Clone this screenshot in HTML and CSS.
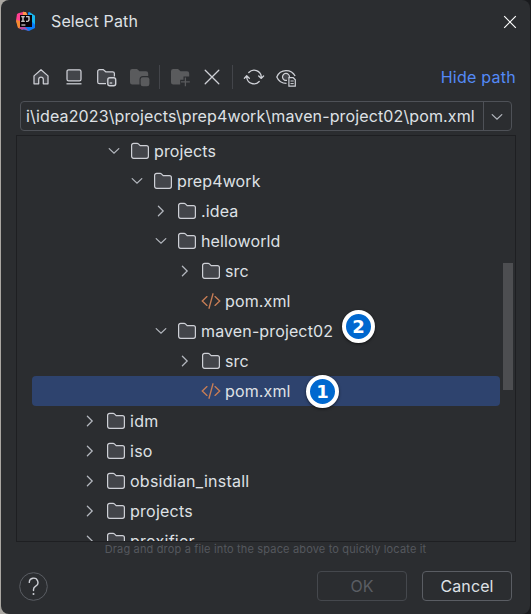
FILE: index.html
```html
<!DOCTYPE html>
<html lang="en">
<head>
<meta charset="utf-8">
<title>Select Path</title>
<link rel="stylesheet" href="styles.css">
</head>
<body>
<svg class="defs" width="0" height="0">
  <symbol id="folder" viewBox="0 0 20 20"><path d="M1.6 4.4a2 2 0 0 1 2-2h3.5a2 2 0 0 1 1.3.5l1.8 1.7h6.2a2 2 0 0 1 2 2v8.7a2 2 0 0 1-2 2H3.6a2 2 0 0 1-2-2z" fill="#43454a" stroke="#ced0d6" stroke-width="1.2"/></symbol>
  <symbol id="down" viewBox="0 0 20 20"><path d="M5.2 7.6 10 12.2l4.8-4.6" fill="none" stroke="#b4b8bf" stroke-width="1.25" stroke-linecap="round"/></symbol>
  <symbol id="right" viewBox="0 0 20 20"><path d="M7.4 5.2 12.2 10l-4.8 4.8" fill="none" stroke="#b4b8bf" stroke-width="1.25" stroke-linecap="round"/></symbol>
  <symbol id="xml" viewBox="0 0 20 20"><path d="M6 5.6 1.3 10 6 14.4M14 5.6l4.7 4.4-4.7 4.4M12 2.8 8 17.2" fill="none" stroke="#c77d55" stroke-width="1.35" stroke-linecap="round"/></symbol>
</svg>
<main class="window">
  <header class="title">
    <svg class="logo" width="20" height="20" viewBox="0 0 20 20">
      <path d="M1 3 8 .5l3 7L5 18l-3-2L0 9z" fill="#f0407c"/>
      <path d="M0 10 3 5l5 7-2 6-4-1z" fill="#f58a32"/>
      <path d="M7 1h3l2 4H7z" fill="#ff9648"/>
      <path d="m12 1 7 4v12l-6 3-8-2 7-10z" fill="#087cfa"/>
      <path d="m13 .8 6 4v9l-4-4z" fill="#18b7ed"/>
      <path d="m1.3 3 3-1.6V10L1 9z" fill="#ff3f94"/>
      <path d="m3 17 4-3 6 6-5-2-2 1z" fill="#b64aa1"/>
      <path d="M4 4h12v12H4z" fill="#080308"/>
      <path d="M5.2 5.7h3.6M7 5.7v4.6m-1.8 0h3.6M10 5.7h3v3.4q0 1.2-1.3 1.2H10M5.4 14h4" fill="none" stroke="#fff" stroke-width="1.1"/>
    </svg>
    <h1>Select Path</h1>
    <svg class="close" width="14" height="14" viewBox="0 0 14 14"><path d="m1.2 1.2 11.6 11.6m0-11.6L1.2 12.8" stroke="#fff" stroke-width="1.2"/></svg>
  </header>
  <div class="toolbar">
    <svg class="tool" viewBox="0 0 20 20"><path d="m10 2.7 7 6.2v7.9h-4.7v-4.5a2.3 2.3 0 0 0-4.6 0v4.5H3V8.9z" fill="#43454a" stroke="#ced0d6" stroke-width="1.25" stroke-linejoin="round"/></svg>
    <svg class="tool" viewBox="0 0 20 20"><rect x="3" y="2.8" width="14" height="11" rx="1.6" fill="#43454a" stroke="#ced0d6" stroke-width="1.25"/><path d="M2.5 16.8h15" stroke="#ced0d6" stroke-width="1.25"/></svg>
    <svg class="tool" viewBox="0.5 0 20 20"><path d="M9.5 16.7H3a1.8 1.8 0 0 1-1.8-1.8V4.4A1.8 1.8 0 0 1 3 2.6h3.7l2.6 2.2h6.8a1.8 1.8 0 0 1 1.8 1.8v3" fill="#43454a" stroke="#ced0d6" stroke-width="1.25"/><rect x="11.3" y="10.8" width="7.9" height="7.9" rx="2" fill="#43454a" stroke="#ced0d6" stroke-width="1.4"/><path d="M13.2 16h2.5" stroke="#ced0d6" stroke-width="1.3"/></svg>
    <svg class="tool" viewBox="0 0 20 20"><path d="M0 4.2A2.2 2.2 0 0 1 2.2 2H7l2.5 2.2H16a2.2 2.2 0 0 1 2.2 2.2V9H13a3.5 3.5 0 0 0-3.5 3.5v5H2.2A2.2 2.2 0 0 1 0 15.3z" fill="#5a5b5d"/><rect x="10.6" y="10.2" width="8.8" height="9" rx="2.3" fill="#5a5b5d"/></svg>
    <i class="divider"></i>
    <svg class="tool" viewBox="0 0 20 20"><path d="M1 4.2A2.2 2.2 0 0 1 3.2 2H8l2.5 2.2H17a2.2 2.2 0 0 1 2.2 2.2v3.2h-5.7v3.2h-3.3v4.7h-7A2.2 2.2 0 0 1 1 15.3z" fill="#5a5b5d"/><path d="M15.4 10.5v8.8M11 14.9h8.8" stroke="#5a5b5d" stroke-width="1.3"/></svg>
    <svg class="tool" viewBox="1 0 20 20"><path d="m3.2 3.3 13.6 13.4m0-13.4L3.2 16.7" stroke="#ced0d6" stroke-width="1.3" stroke-linecap="round"/></svg>
    <i class="divider"></i>
    <svg class="tool" viewBox="-1 0 20 20"><path d="M4.8 5.5A7.2 7.2 0 0 1 17.3 10v1M2.7 9v1a7.2 7.2 0 0 0 12.5 4.5M.4 11.2l2.3-2.4L5.3 11.2M14.7 9l2.6 2.4L19.6 9" fill="none" stroke="#ced0d6" stroke-width="1.3" stroke-linecap="round" stroke-linejoin="round"/></svg>
    <svg class="tool" viewBox="0 0 20 20"><path d="M10.5 16.4C4.7 16.4 2 13 .8 10 2.2 6.4 5.4 3.6 10 3.6s7.8 2.8 9.1 5.5" fill="none" stroke="#ced0d6" stroke-width="1.25"/><path d="M11 13.3A3.5 3.5 0 1 1 13.5 10" fill="#43454a" stroke="#ced0d6" stroke-width="1.25"/><path d="M12.9 10.7h4.3l2.1 2v6.5h-6.4z" fill="#2b2d30" stroke="#ced0d6" stroke-width="1.2"/><path d="M14.5 14h3.2m-3.2 2.6h3.2" stroke="#ced0d6"/></svg>
    <a class="link">Hide path</a>
  </div>
  <div class="combo"><span class="path">i\idea2023\projects\prep4work\maven-project02\pom.xml</span><span class="arrow"><svg class="ico"><use href="#down"/></svg></span></div>
  <div class="tree">
    <div class="row l1"><svg class="ico"><use href="#down"/></svg><svg class="ico"><use href="#folder"/></svg><span>projects</span></div>
    <div class="row l2"><svg class="ico"><use href="#down"/></svg><svg class="ico"><use href="#folder"/></svg><span>prep4work</span></div>
    <div class="row l3"><svg class="ico"><use href="#right"/></svg><svg class="ico"><use href="#folder"/></svg><span>.idea</span></div>
    <div class="row l3"><svg class="ico"><use href="#down"/></svg><svg class="ico"><use href="#folder"/></svg><span>helloworld</span></div>
    <div class="row l4"><svg class="ico"><use href="#right"/></svg><svg class="ico"><use href="#folder"/></svg><span>src</span></div>
    <div class="row l4"><svg class="ico"></svg><svg class="ico"><use href="#xml"/></svg><span>pom.xml</span></div>
    <div class="row l3"><svg class="ico"><use href="#down"/></svg><svg class="ico"><use href="#folder"/></svg><span>maven-project02</span></div>
    <div class="row l4"><svg class="ico"><use href="#right"/></svg><svg class="ico"><use href="#folder"/></svg><span>src</span></div>
    <div class="row l4 selected"><svg class="ico"></svg><svg class="ico"><use href="#xml"/></svg><span>pom.xml</span></div>
    <div class="row l0"><svg class="ico"><use href="#right"/></svg><svg class="ico"><use href="#folder"/></svg><span>idm</span></div>
    <div class="row l0"><svg class="ico"><use href="#right"/></svg><svg class="ico"><use href="#folder"/></svg><span>iso</span></div>
    <div class="row l0"><svg class="ico"><use href="#right"/></svg><svg class="ico"><use href="#folder"/></svg><span>obsidian_install</span></div>
    <div class="row l0"><svg class="ico"><use href="#right"/></svg><svg class="ico"><use href="#folder"/></svg><span>projects</span></div>
    <div class="row l0"><svg class="ico"><use href="#right"/></svg><svg class="ico"><use href="#folder"/></svg><span>proxifier</span></div>
    <i class="thumb"></i>
    <b class="badge two">2</b>
    <b class="badge one">1</b>
  </div>
  <p class="hint">Drag and drop a file into the space above to quickly locate it</p>
  <footer>
    <span class="help"><svg width="29" height="29" viewBox="0 0 29 29"><circle cx="14.5" cy="14.5" r="13.8" fill="none" stroke="#5a5d63"/><path d="M10.3 10.4a4.3 4.3 0 1 1 6.4 3.8c-1.5.9-2.2 1.6-2.2 3.3v1" fill="none" stroke="#ced0d6" stroke-width="1.4" stroke-linecap="round"/><circle cx="14.5" cy="22" r="1" fill="#ced0d6"/></svg></span>
    <button class="ok" disabled>OK</button>
    <button>Cancel</button>
  </footer>
</main>
</body>
</html>
```
FILE: styles.css
```css
* { box-sizing: border-box; }
body {
  margin: 0;
  height: 614px;
  overflow: hidden;
  background: linear-gradient(90deg, #aaa7a2 50%, #191a1d 50%);
  font: 16px/20px Inter, "Liberation Sans", sans-serif;
  letter-spacing: 0.13px;
  color: #dfe1e5;
}
.defs { position: absolute; }
.window {
  display: flex;
  flex-direction: column;
  height: 614px;
  margin: 0 1px;
  background: #2b2d30;
  border-radius: 8px;
}
svg { display: block; flex: none; overflow: visible; }
.title { display: flex; align-items: center; height: 43px; padding: 0 14px 0 15px; }
.logo { margin-top: -1px; }
.title h1 { flex: 1; margin: -2px 0 0 15px; font-size: 16px; font-weight: 400; }
.close { margin-right: -1px; }
.toolbar { display: flex; align-items: center; height: 58px; padding: 10px 14px 0 30px; }
.tool { width: 20px; height: 20px; margin-right: 13px; }
.divider { width: 1px; height: 24px; margin: 0 10px 0 -4px; background: #43454a; }
.link { margin-left: auto; color: #548af7; letter-spacing: 0.25px; }
.combo {
  display: flex;
  height: 30px;
  margin: 0 18px 0 19px;
  border: 1px solid #4e5157;
  border-radius: 4px;
  line-height: 28px;
}
.path { flex: 1; padding-left: 5px; white-space: nowrap; }
.arrow { display: flex; align-items: center; justify-content: center; width: 28px; padding: 2px 2px 0 0; border-left: 1px solid #4e5157; }
.tree {
  position: relative;
  height: 407px;
  margin: 4px 14px 0 15px;
  border: 1px solid #1e1f22;
  overflow: hidden;
}
.row { display: flex; align-items: center; height: 30px; margin: 0 15px; white-space: nowrap; }
.ico { width: 20px; height: 20px; }
.row .ico + .ico { margin: 0 4px 0 6px; }
.l0 { padding-left: 48px; letter-spacing: 0.25px; }
.l1 { padding-left: 72px; }
.l2 { padding-left: 95px; }
.l3 { padding-left: 119px; }
.l4 { padding-left: 143px; }
.selected { background: #2e436e; border-radius: 4px; }
.thumb { position: absolute; right: 2px; top: 127px; width: 10px; height: 127px; background: #4d4e51; }
.badge {
  position: absolute;
  width: 33px;
  height: 33px;
  border: 4px solid #fff;
  border-radius: 50%;
  background: #0068cf;
  box-shadow: 0 1px 3px #0009;
  color: #fff;
  font: bold 18px/25px "DejaVu Sans", sans-serif;
  text-align: center;
}
.two { left: 325px; top: 174px; }
.one { left: 289px; top: 239px; }
.hint { margin: 0; height: 15px; color: #55585e; font-size: 11px; line-height: 15px; letter-spacing: 0.16px; text-align: center; }
footer { display: flex; align-items: center; gap: 15px; height: 30px; margin: 14px 18px 0; }
.help { flex: 1; }
button {
  width: 90px;
  height: 30px;
  padding: 0;
  border: 1px solid #5a5d63;
  border-radius: 4px;
  background: none;
  color: #dfe1e5;
  font: inherit;
  letter-spacing: inherit;
}
.ok { border-color: #45484d; color: #5a5d63; }
```
